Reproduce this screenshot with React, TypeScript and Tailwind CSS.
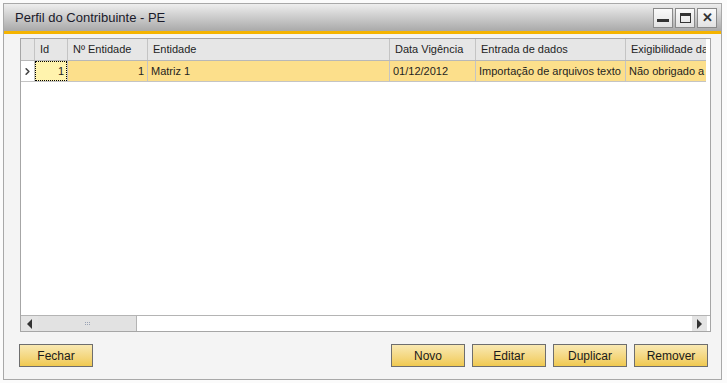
import { ChevronRight } from 'lucide-react'

const cols = [
  { label: 'Id', w: 'w-[33px]', value: '1', right: true, focus: true },
  { label: 'Nº Entidade', w: 'w-[80px]', value: '1', right: true },
  { label: 'Entidade', w: 'w-[242px]', value: 'Matriz 1' },
  { label: 'Data Vigência', w: 'w-[86px]', value: '01/12/2012' },
  { label: 'Entrada de dados', w: 'w-[150px]', value: 'Importação de arquivos texto' },
  { label: 'Exigibilidade da informação', w: 'w-[160px]', value: 'Não obrigado a entregar' },
]

function SapButton({ label }: { label: string }) {
  return (
    <button className="h-[23px] w-[74px] border border-[#6e6e6e] bg-gradient-to-b from-[#f9e9b2] to-[#f0c94f] text-[12px] text-[#1a1a1a]">
      {label}
    </button>
  )
}

function WinButton({ children }: { children: React.ReactNode }) {
  return (
    <div className="flex h-[20px] w-[20px] items-center justify-center border border-[#8a8a8a] bg-gradient-to-b from-[#fafafa] to-[#e2e2e2]">
      {children}
    </div>
  )
}

export default function App() {
  return (
    <div
      className="h-[383px] w-[727px] bg-[#fbfbfb] p-[3px] text-[#1e1e1e]"
      style={{ fontFamily: '"Liberation Sans", Arial, sans-serif' }}
    >
      <div className="flex h-[377px] w-[719px] flex-col border border-[#a8a8a8] bg-[#f4f4f4]">
        {/* title bar */}
        <div className="flex h-[27px] items-center justify-between bg-gradient-to-b from-[#eeeeee] to-[#a9a9a9] pl-[11px] pr-[4px]">
          <span className="text-[13px] text-[#1a1a2a]">Perfil do Contribuinte - PE</span>
          <div className="flex gap-[2px]">
            <WinButton>
              <div className="mt-[5px] h-[3px] w-[12px] bg-[#333]" />
            </WinButton>
            <WinButton>
              <div className="h-[10px] w-[11px] border border-t-[3px] border-[#333]" />
            </WinButton>
            <WinButton>
              <span className="text-[13px] font-bold leading-none text-[#333]">✕</span>
            </WinButton>
          </div>
        </div>
        <div className="h-[3px] bg-[#f5b400]" />

        {/* body */}
        <div className="flex flex-1 flex-col pl-[16px] pr-[10px] pt-[4px]">
          <div className="flex h-[294px] flex-col border border-[#a6a6a6] bg-white">
            <div className="flex-1 overflow-hidden pr-[4px]">
              {/* header */}
              <div className="flex h-[22px] overflow-hidden border-b border-[#b8b8b8] bg-[#e6e6e6] text-[11px]">
                <div className="w-[14px] shrink-0 border-r border-[#c4c4c4]" />
                {cols.map((c) => (
                  <div
                    key={c.label}
                    className={`${c.w} flex shrink-0 items-center overflow-hidden whitespace-nowrap border-r border-[#c4c4c4] pl-[5px]`}
                  >
                    {c.label}
                  </div>
                ))}
              </div>
              {/* data row */}
              <div className="flex h-[21px] overflow-hidden border-b border-[#c4c4c4] bg-[#fcdf8b] text-[11px]">
                <div className="flex w-[14px] shrink-0 items-center justify-center border-r border-[#c4c4c4] bg-white">
                  <ChevronRight size={11} strokeWidth={3.5} className="text-[#444]" />
                </div>
                {cols.map((c) =>
                  c.focus ? (
                    <div
                      key={c.label}
                      className={`${c.w} flex shrink-0 items-center justify-end border-r border-[#c4c4c4] bg-[#fff3ad]`}
                    >
                      <div className="flex h-full w-full items-center justify-end border border-dotted border-black pr-[2px]">
                        {c.value}
                      </div>
                    </div>
                  ) : (
                    <div
                      key={c.label}
                      className={`${c.w} flex shrink-0 items-center overflow-hidden whitespace-nowrap border-r border-[#c4c4c4] ${c.right ? 'justify-end pr-[3px]' : 'pl-[3px]'}`}
                    >
                      {c.value}
                    </div>
                  ),
                )}
              </div>
            </div>
            {/* horizontal scrollbar */}
            <div className="flex h-[16px] border-t border-[#b4b4b4] bg-white pr-[3px]">
              <div className="flex w-[17px] items-center justify-center bg-[#e4e4e4]">
                <div className="h-0 w-0 border-y-[5px] border-r-[5px] border-y-transparent border-r-[#333]" />
              </div>
              <div className="flex w-[99px] items-center justify-center border-r border-[#b4b4b4] bg-[#e2e2e2]">
                <div className="grid grid-cols-3 gap-[1px]">
                  {Array.from({ length: 6 }).map((_, i) => (
                    <div key={i} className="h-[1px] w-[1px] bg-[#9aa3b5]" />
                  ))}
                </div>
              </div>
              <div className="flex-1" />
              <div className="flex w-[15px] items-center justify-center bg-[#e4e4e4]">
                <div className="h-0 w-0 border-y-[5px] border-l-[5px] border-y-transparent border-l-[#333]" />
              </div>
            </div>
          </div>

          {/* buttons */}
          <div className="ml-[-1px] mt-[12px] flex items-center justify-between pr-[3px]">
            <SapButton label="Fechar" />
            <div className="flex gap-[7px]">
              <SapButton label="Novo" />
              <SapButton label="Editar" />
              <SapButton label="Duplicar" />
              <SapButton label="Remover" />
            </div>
          </div>
        </div>
      </div>
    </div>
  )
}
